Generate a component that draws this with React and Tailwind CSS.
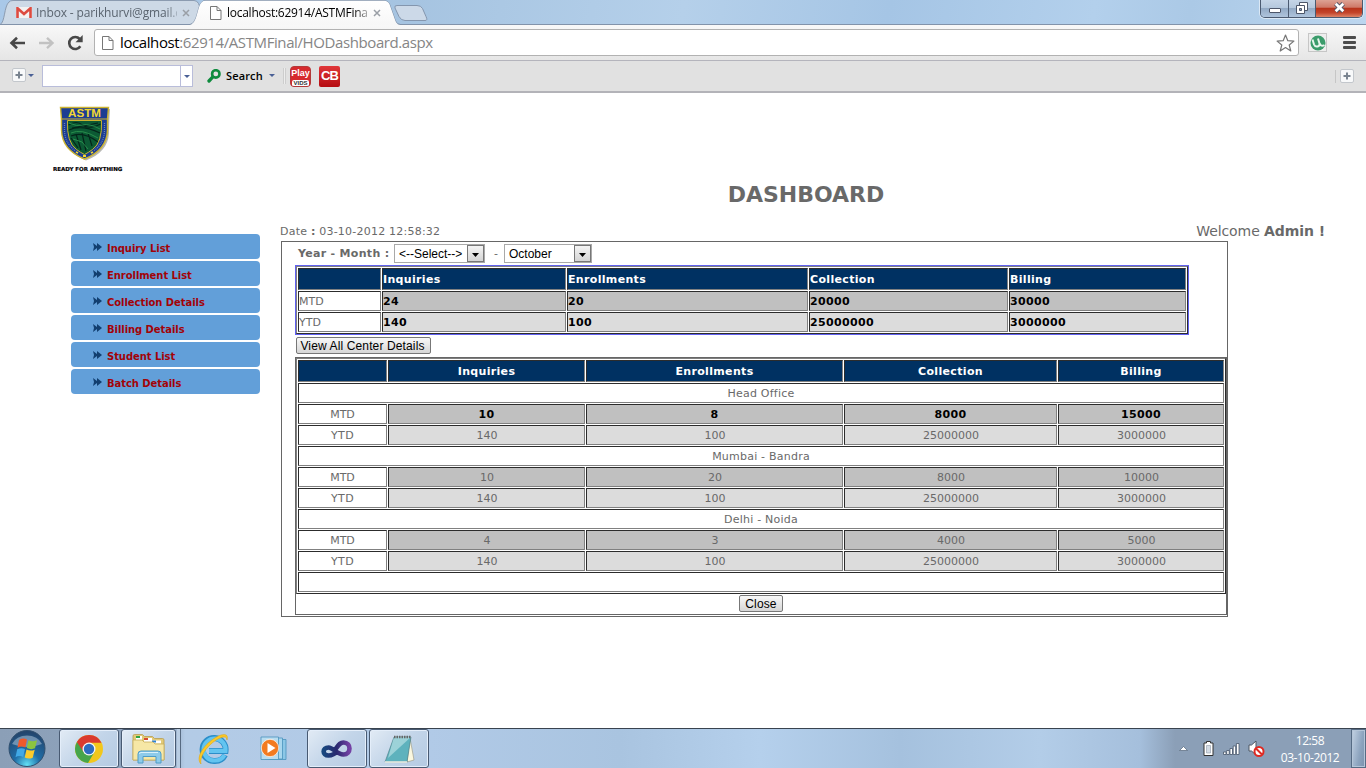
import React from "react";

const ui = "font-['Open_Sans','Noto_Sans',sans-serif]";
const page = "font-['DejaVu_Sans',sans-serif]";
const form = "font-['Liberation_Sans',sans-serif]";

function PageIcon({ className }) {
  return (
    <svg className={className} viewBox="0 0 12 14" fill="#fff" stroke="#777" strokeWidth="1">
      <path d="M.5.5h6.500l4 4v9h-10.500z" />
      <path d="M7 .5v4h4" fill="none" />
    </svg>
  );
}

function CloseX({ className }) {
  return (
    <svg className={className} viewBox="0 0 8 8" stroke="#9a9fa6" strokeWidth="1.500">
      <path d="M1 1l6 6M7 1l-6 6" />
    </svg>
  );
}

function TabStrip() {
  return (
    <div className="relative h-[25px] w-full border-b border-[#8293aa] bg-[linear-gradient(100deg,#a9c8e8_0%,#a6c4e1_30%,#b5d0ea_50%,#a5c5e5_65%,#b3d0ec_80%,#abc9e6_87%,#bcd6ef_100%)]">
      <svg className="absolute left-0 top-0 h-[25px] w-[440px]" viewBox="0 0 440 25">
        <defs>
          <linearGradient id="tab" x1="0" y1="0" x2="0" y2="1">
            <stop offset="0" stopColor="#fff" />
            <stop offset="1" stopColor="#f7f7f7" />
          </linearGradient>
        </defs>
        <path d="M0 24.500C5 23 4 6 9 2q1-1.500 4-1.500h181q3 0 4.500 3l7 18q1 3 4 3z" fill="#cdd9e6" stroke="#8b9bb0" />
        <path d="M395 8q-1-2.500 2-2.500h20q4 0 5.500 3l3.500 8q2 4-1 4h-20q-4 0-6-4z" fill="#ccd9e8" stroke="#8496ae" />
        <path d="M0 24.500h190C198 23 197 6 202 2q1-1.500 4-1.500h178q4 0 5.500 3.500l6 17q1.500 3.500 5 3.500h40" fill="none" stroke="#8293aa" />
        <path d="M190 25C198 23 197 6 202 2q1-1.200 4-1.200h178q4 0 5.500 3.500l6 17q1.500 3.700 5 3.700z" fill="url(#tab)" />
      </svg>
      <div className={"relative flex h-[25px] items-center text-[12px] " + ui}>
        <svg className="ml-[16px] h-[11px] w-[16px]" viewBox="0 0 16 11">
          <path d="M0 0h16v11H0z" fill="#f3f1f1" />
          <path d="M1.500 11V1.200L8 7l6.500-5.800V11" fill="none" stroke="#dd4b40" strokeWidth="2.600" />
        </svg>
        <div className="ml-[4px] w-[141px] whitespace-nowrap tracking-[-0.14px] text-[#5a646f] [mask-image:linear-gradient(90deg,#000_92%,rgba(0,0,0,.3))]">Inbox - parikhurvi@gmail.c</div>
        <CloseX className="ml-[5px] h-[8px] w-[8px]" />
        <PageIcon className="ml-[20px] h-[14px] w-[12px]" />
        <div className="ml-[5px] w-[141px] whitespace-nowrap tracking-[-0.26px] text-black [mask-image:linear-gradient(90deg,#000_90%,rgba(0,0,0,.3))]">localhost:62914/ASTMFina</div>
        <CloseX className="ml-[5px] h-[8px] w-[8px]" />
      </div>
      <div className="absolute right-[3px] top-0 flex h-[18px] w-[103px] overflow-hidden rounded-b-[5px] border border-t-0 border-[#4b5a70] shadow-[0_0_0_1px_#dbe8f5]">
        <div className="flex w-[28px] items-center justify-center border-r border-[#4b5a70] bg-[linear-gradient(#c5d5e7,#b5c8dd_45%,#93aac5_50%,#afc4dc)]">
          <div className="mt-[4px] h-[5px] w-[12px] rounded-[1px] border border-[#4d5669] bg-white" />
        </div>
        <div className="flex w-[27px] items-center justify-center border-r border-[#4b5a70] bg-[linear-gradient(#c5d5e7,#b5c8dd_45%,#93aac5_50%,#afc4dc)]">
          <svg className="mb-[2px] h-[12px] w-[12px]" viewBox="0 0 12 12" fill="#fff" stroke="#4d5669">
            <path d="M3.500.5h8v8h-8z" />
            <path d="M.5 3.500h8v8h-8z" />
            <path d="M3.500 6.500h2v2h-2z" fill="#8ea3bf" />
          </svg>
        </div>
        <div className="flex flex-1 items-center justify-center bg-[linear-gradient(#dda294,#cf7a69_42%,#b8341c_50%,#c4452b_75%,#dd8468)]">
          <svg className="mb-[2px] h-[11px] w-[13px]" viewBox="0 0 12 10">
            <path d="M2.500 1.500l7 7M9.500 1.500l-7 7" stroke="#525668" strokeWidth="4.200" />
            <path d="M2.500 1.500l7 7M9.500 1.500l-7 7" stroke="#fff" strokeWidth="2.500" />
          </svg>
        </div>
      </div>
    </div>
  );
}

function AddressBar() {
  return (
    <div className="flex h-[35px] w-full items-center bg-[linear-gradient(#f8f8f8,#e6e6e6)]">
      <svg className="ml-[9px] h-[14px] w-[17px]" viewBox="0 0 17 14" fill="none" stroke="#484848" strokeWidth="2.600">
        <path d="M16 7H2.500M8 1.800L2.500 7 8 12.200" />
      </svg>
      <svg className="ml-[12px] h-[14px] w-[17px]" viewBox="0 0 17 14" fill="none" stroke="#c2c2c2" strokeWidth="2.400">
        <path d="M1 7h13.500M9 1.800L14.500 7 9 12.200" />
      </svg>
      <svg className="ml-[12px] h-[16px] w-[17px]" viewBox="0 0 17 16">
        <path d="M13.300 11.300a6 6 0 1 1-.6-7.300" fill="none" stroke="#484848" strokeWidth="2.600" />
        <path d="M15.700 0v7.200H8.500z" fill="#484848" />
      </svg>
      <div className="ml-[10px] flex h-[27px] w-[1205px] items-center rounded-[3px] border border-[#b2b2b2] bg-white">
        <PageIcon className="ml-[7px] h-[14px] w-[12px]" />
        <div className={"ml-[6px] whitespace-nowrap text-[15px] tracking-[-0.4px] text-[#858585] " + ui}>
          <span className="text-black">localhost</span>:62914/ASTMFinal/HODashboard.aspx
        </div>
        <svg className="ml-auto mr-[3px] h-[18px] w-[19px]" viewBox="0 0 19 18" fill="#fff" stroke="#777" strokeWidth="1.200" strokeLinejoin="round">
          <path d="M9.500 1l2.300 5.700 6.100.4-4.700 3.900 1.600 6-5.300-3.400L4.200 17l1.600-6L1.100 7.100l6.100-.4z" />
        </svg>
      </div>
      <div className="ml-[9px] flex h-[19px] w-[19px] items-center justify-center border border-[#c6c6c6] bg-[#eee]">
        <svg className="h-[16px] w-[16px]" viewBox="0 0 16 16">
          <circle cx="8" cy="8" r="7.500" fill="#3b9c6b" />
          <path d="M2.500 4.500l1.500 5q1 2.500 3.500 2t2-3L8 3.500M9.500 8.500q1.500 3.500 5 1.500" stroke="#e9f6ee" strokeWidth="2" fill="none" />
        </svg>
      </div>
      <div className="ml-[16px] flex w-[13px] flex-col gap-[2px]">
        <div className="h-[3px] rounded-[1px] bg-[#4c4c4c]" />
        <div className="h-[3px] rounded-[1px] bg-[#4c4c4c]" />
        <div className="h-[3px] rounded-[1px] bg-[#4c4c4c]" />
      </div>
    </div>
  );
}

function Plus() {
  return (
    <div className="flex h-[14px] w-[14px] items-center justify-center rounded-[2px] border border-[#c3c7cc] bg-[#f8f9fa]">
      <svg className="h-[8px] w-[8px]" viewBox="0 0 8 8" stroke="#7a8490" strokeWidth="2"><path d="M4 .5v7M.5 4h7" /></svg>
    </div>
  );
}

function Caret({ className }) {
  return <svg className={className} viewBox="0 0 6 3" fill="#4a6096"><path d="M0 0h6L3 3z" /></svg>;
}

function ExtensionBar() {
  return (
    <div className="flex h-[33px] w-full items-center border-b-2 border-t border-b-[#b3b3b8] border-t-[#b4b4bc] bg-[#e1e1e1]">
      <div className="mb-[2px] ml-[12px]"><Plus /></div>
      <Caret className="mb-[2px] ml-[2px] h-[3px] w-[6px]" />
      <div className="ml-[8px] flex h-[22px] w-[151px] border border-[#b9bdda] bg-white">
        <div className="ml-auto flex w-[12px] items-center justify-center border-l border-[#b9bdda]"><Caret className="h-[3px] w-[6px]" /></div>
      </div>
      <svg className="ml-[14px] h-[14px] w-[14px]" viewBox="0 0 14 14" fill="none">
        <circle cx="8.800" cy="4.900" r="3.700" stroke="#0e8b3d" strokeWidth="2.600" />
        <path d="M5.600 8.200L2 12" stroke="#0e8b3d" strokeWidth="3.300" strokeLinecap="round" />
      </svg>
      <div className="ml-[5px] mt-[1px] w-[38px] whitespace-nowrap font-['Open_Sans',sans-serif] text-[11px] font-semibold tracking-[0.15px] text-black">Search</div>
      <Caret className="mb-[2px] ml-[5px] h-[3px] w-[6px]" />
      <div className="ml-[8px] flex h-[16px] w-[3px] border-x border-[#cdcdcd] bg-[#ededed]" />
      <div className="ml-[4px] flex h-[21px] w-[21px] flex-col items-center overflow-hidden rounded-[4px] border border-[#b33a3a] bg-[#d62a2e] font-['Liberation_Sans',sans-serif] font-bold">
        <div className="h-[12px] text-[9px] leading-[12px] text-white">Play</div>
        <div className="mt-[1px] h-[7px] w-[17px] rounded-[2px] bg-white text-center text-[6px] leading-[7px] text-[#333]">VIDS</div>
      </div>
      <div className="ml-[8px] flex h-[21px] w-[21px] items-center justify-center rounded-[2px] bg-[linear-gradient(#e0373a,#b50d12)] font-['Liberation_Sans',sans-serif] text-[13px] font-bold tracking-[-0.9px] text-white">CB</div>
      <div className="ml-auto mr-[4px] h-[13px] w-[1px] bg-[#c6c6c6]" />
      <div className="mr-[12px]"><Plus /></div>
    </div>
  );
}

function Logo() {
  return (
    <div className="flex h-[88px] flex-col pl-[53px]">
      <svg className="ml-[6px] mt-[13px] h-[55px] w-[53px] shrink-0" viewBox="0 0 53 55">
        <path d="M3 3h48q-1 14-1 24Q49 46 27 54.500 5 46 4 27 4 13 3 3z" fill="#b8b8b4" />
        <path d="M1.500 1.500h48Q48 14 48.500 24 48 44 25.500 53 3 44 2.500 24 3 14 1.500 1.500z" fill="#1c3d92" stroke="#cdb42f" strokeWidth="1.400" />
        <path d="M2.500 13h46" stroke="#cdb42f" strokeWidth="1.200" />
        <path d="M8.500 14.500h34q1 22-9 29-4 3-8 5-4-2-8-5-10-7-9-29z" fill="#0c5a34" stroke="#cdb42f" />
        <path d="M9.500 19q8-5 14 0t18-1M10 24q12-6 31 3M12 30q12-5 27 6M12 32l7 10M17 28l5 16M23 27l4 18M29 27l4 13M13 22l26-5" stroke="#04251a" strokeWidth="1.200" fill="none" />
        <path d="M10 17q8 4 14 2t17 4M12 27q10-5 27 5M14 33l9 3 6 7" stroke="#2f9a52" strokeWidth=".8" fill="none" />
        <path d="M5.500 17v7q0 13 11 21M45.500 17v7q0 13-11 21" stroke="#8b9ccb" strokeWidth="1.300" strokeDasharray="1 1" opacity=".7" fill="none" />
        <path d="M17 46l2 1M24 50h3M32 47l2-1" stroke="#f3d832" strokeWidth="1.800" />
        <text x="25.500" y="10.800" textAnchor="middle" textLength="33" lengthAdjust="spacingAndGlyphs" fontFamily="Liberation Sans" fontWeight="bold" fontSize="10" fill="#f3d832">ASTM</text>
      </svg>
      <div className="mt-[-2px] h-[10px] whitespace-nowrap pt-[5px] font-['DejaVu_Sans',sans-serif] text-[5.500px] font-bold leading-[10px] text-black [-webkit-text-stroke:0.2px_#000]">READY FOR ANYTHING</div>
    </div>
  );
}

const links = ["Inquiry List", "Enrollment List", "Collection Details", "Billing Details", "Student List", "Batch Details"];

function Sidebar() {
  return (
    <nav className="ml-[71px] mt-[12px] flex w-[189px] flex-col gap-[2px]">
      {links.map((l) => (
        <div key={l} className="flex h-[25px] items-center rounded-[4px] bg-[#629fd9] pl-[22px]">
          <svg className="h-[8px] w-[9px]" viewBox="0 0 9 8" fill="#123f70"><path d="M0 0l4 3V0l5 4-5 4V5L0 8l1-4z" /></svg>
          <span className="ml-[5px] mt-[4px] whitespace-nowrap text-[10px] font-bold leading-[14px] tracking-[-0.06px] text-[#a20308]">{l}</span>
        </div>
      ))}
    </nav>
  );
}

const cell = "flex items-center border pt-[2px] border-b-[#808080] border-l-[#2c2c2c] border-r-[#808080] border-t-[#2c2c2c] ";
const heads = ["Inquiries", "Enrollments", "Collection", "Billing"];

function Summary() {
  const rows = [
    ["MTD", "bg-[#c0c0c0]", ["24", "20", "20000", "30000"]],
    ["YTD", "bg-[#dcdcdc]", ["140", "100", "25000000", "3000000"]],
  ];
  return (
    <div className="ml-[13px] w-[894px] border border-[#6262f0]">
      <div className="grid grid-cols-[83px_184px_241px_199px_177px] grid-rows-[22px_20px_20px] gap-px border border-b-[#2c2c2c] border-l-[#808080] border-r-[#2c2c2c] border-t-[#808080] p-px text-[11px] leading-[14px]">
        <div className={cell + "bg-[#003162]"} />
        {heads.map((h) => <div key={h} className={cell + "bg-[#003162] font-bold tracking-[0.33px] text-white"}>{h}</div>)}
        {rows.map(([n, bg, v]) => (
          <React.Fragment key={n}>
            <div className={cell}>{n}</div>
            {v.map((x, i) => <div key={i} className={cell + bg + " font-bold tracking-[0.35px] text-black"}>{x}</div>)}
          </React.Fragment>
        ))}
      </div>
    </div>
  );
}

const centers = [
  ["Head Office", ["10", "8", "8000", "15000"]],
  ["Mumbai - Bandra", ["10", "20", "8000", "10000"]],
  ["Delhi - Noida", ["4", "3", "4000", "5000"]],
];

function Centers() {
  return (
    <div className="grid grid-cols-[89px_197px_257px_213px_166px] grid-rows-[22px] auto-rows-[20px] gap-px border border-b-[#2c2c2c] border-l-[#808080] border-r-[#2c2c2c] border-t-[#808080] p-px text-[11px] leading-[14px]">
      <div className={cell + "bg-[#003162]"} />
      {heads.map((h) => <div key={h} className={cell + "justify-center bg-[#003162] font-bold tracking-[0.33px] text-white"}>{h}</div>)}
      {centers.map(([name, mtd], k) => (
        <React.Fragment key={name}>
          <div className={cell + "col-span-5 justify-center tracking-[0.22px]"}>{name}</div>
          <div className={cell + "justify-center"}>MTD</div>
          {mtd.map((x, i) => <div key={i} className={cell + "justify-center bg-[#c0c0c0] " + (k === 0 ? "font-bold tracking-[0.35px] text-black" : "pl-px")}>{x}</div>)}
          <div className={cell + "justify-center tracking-[0.3px]"}>YTD</div>
          {["140", "100", "25000000", "3000000"].map((x, i) => <div key={i} className={cell + "justify-center bg-[#dcdcdc] pl-px"}>{x}</div>)}
        </React.Fragment>
      ))}
      <div className={cell + "col-span-5"} />
    </div>
  );
}

function Select({ label, className }) {
  return (
    <div className={"flex h-[19px] items-center border border-[#a9a9a9] bg-white text-[12px] text-black " + form + " " + className}>
      <span className="ml-[4px] whitespace-nowrap">{label}</span>
      <div className="ml-auto flex h-[17px] w-[17px] items-center justify-center border border-[#777] bg-[linear-gradient(#f4f4f4,#d4d4d4)]">
        <svg className="mt-[2px] h-[4px] w-[7px]" viewBox="0 0 7 4"><path d="M0 0h7L3.500 4z" /></svg>
      </div>
    </div>
  );
}

const btn = "flex h-[17px] items-center justify-center whitespace-nowrap rounded-[2px] border border-[#777] bg-[linear-gradient(#f8f8f8,#d6d6d6)] text-[12px] tracking-[0.13px] text-black " + form + " ";

function Main() {
  return (
    <main className="ml-[21px] w-[1045px]">
      <div className="flex h-[19px] w-[1044px] items-center justify-between">
        <div className="ml-[-1px] mt-[2px] text-[11px] tracking-[0.22px]">Date <b>:</b> 03-10-2012 12:58:32</div>
        <div className="text-[14px] tracking-[-0.08px]">Welcome <b>Admin !</b></div>
      </div>
      <div className="h-[376px] w-[947px] border border-[#666]">
        <div className="flex h-[23px] items-center pl-[16px] text-[11px]">
          <b className="w-[96px] whitespace-nowrap pt-[2px] tracking-[0.3px]">Year - Month :</b>
          <Select label="<--Select-->" className="w-[91px]" />
          <span className="w-[19px] pl-[9px] pt-[2px]">-</span>
          <Select label="October" className="w-[88px]" />
        </div>
        <Summary />
        <div className={btn + "ml-[14px] mt-[2px] w-[135px] pr-[2px]"}>View All Center Details</div>
        <div className="ml-[13px] mt-[3px] h-[258px] w-[932px] border border-[#666]">
          <Centers />
          <div className={btn + "mx-auto mt-[1px] w-[44px]"}>Close</div>
        </div>
      </div>
    </main>
  );
}

function TaskButton({ children, className }) {
  return (
    <div className={"flex h-[39px] items-center justify-center rounded-[3px] border border-[#485a72] bg-[linear-gradient(135deg,#e2ebf5,#c3d5e9_50%,#b4cae2)] shadow-[inset_0_0_0_1px_#e4eefa] " + className}>
      {children}
    </div>
  );
}

function Taskbar() {
  return (
    <footer className={"flex h-[40px] w-full items-center border-t border-[#39434f] bg-[linear-gradient(90deg,#8b9fb7_0,#90a5bf_170px,#b3cbe6_185px,#b1cae7_430px,#a9c4e0_620px,#b5d0ec_760px,#a5c1de_900px,#b3cde8_1040px,#a5bfdc_1140px,#8b9fb7_1175px,#8b9fb7_100%)] " + ui}>
      <svg className="ml-[7px] h-[39px] w-[40px]" viewBox="0 0 40 39">
        <defs>
          <radialGradient id="orb" cx=".5" cy=".95" r=".9">
            <stop offset="0" stopColor="#62e0f5" />
            <stop offset=".4" stopColor="#1f6ea8" />
            <stop offset="1" stopColor="#23466e" />
          </radialGradient>
        </defs>
        <circle cx="20" cy="19.500" r="18" fill="url(#orb)" stroke="#31506f" />
        <path d="M5 15a16 13 0 0 1 30 0q-15 6-30 0z" fill="#b9cde0" opacity=".5" />
        <path d="M12 11q4-2.500 8-.5l-1.700 8q-4-2-7.800.3z" fill="#ee5a2c" />
        <path d="M21.500 11.300q4 2 8.500 0l-2 8q-4 1.800-8.200-.3z" fill="#8cc540" />
        <path d="M10.200 20.300q4-2 7.800-.3l-1.800 8q-4-2-7.700.2z" fill="#41a9e6" />
        <path d="M19.500 20.500q4 2 8.200.2l-2 8q-4 1.800-8-.2z" fill="#fbcb2c" />
      </svg>
      <TaskButton className="ml-[12px] w-[60px]">
        <svg className="h-[28px] w-[28px]" viewBox="0 0 28 28">
          <circle cx="14" cy="14" r="14" fill="#f2c71c" />
          <path d="M14 14L1.900 7A14 14 0 0 0 13 28l6.500-11z" fill="#46a54b" />
          <path d="M1.900 7A14 14 0 0 1 26.500 7.700H14L8.500 17z" fill="#da3a2f" />
          <circle cx="14" cy="14" r="6.500" fill="#f5f5f5" />
          <circle cx="14" cy="14" r="5.200" fill="#2d6cc0" />
        </svg>
      </TaskButton>
      <TaskButton className="ml-[2px] w-[55px]">
        <svg className="h-[30px] w-[33px]" viewBox="0 0 33 30">
          <path d="M1 2q0-1.500 1.500-1.500h8l2 2h8l2 2h8q1.500 0 1.500 1.500v20H1z" fill="#e2ca78" stroke="#b89d4e" strokeWidth=".8" />
          <path d="M4 2h6v4H4zM12 4h8v4h-8zM20 6.500h9v3h-9z" fill="#fff" />
          <path d="M4 2h4v2H4z" fill="#2ea443" /><path d="M12 4h4v2h-4z" fill="#d64a32" /><path d="M20 6.500h4v2h-4z" fill="#2e82d5" />
          <path d="M1 6h9l2 2h9l2 2h9v16H1z" fill="#f6e7a6" stroke="#c8ae5c" strokeWidth=".8" />
          <path d="M6 29v-9q0-3 3-3h17q3 0 3 3v9h-5v-6.500H11V29z" fill="#8ecbea" stroke="#4f9cc7" />
          <path d="M7.500 20q0-1.500 1.500-1.500h17" fill="none" stroke="#d9f1fb" />
        </svg>
      </TaskButton>
      <div className="ml-[1px] h-[39px] w-[4px] border-r border-[#566a82] bg-[#b9cde3]" />
      <svg className="ml-[16px] h-[34px] w-[34px]" viewBox="0 0 34 34">
        <path d="M28 23q-3 6-10 6A11.500 11.500 0 1 1 28.500 19H12" fill="none" stroke="#2b8ec9" strokeWidth="6" />
        <path d="M27.500 23q-3 5.500-9.500 5.500A11 11 0 1 1 28.500 18.800H12" fill="none" stroke="#62c4f0" strokeWidth="4.200" />
        <path d="M4 32C-3 25 10 8 24 3q8-2 6 5 0-5-7-2C12 11 2 24 4 32z" fill="#fbc928" stroke="#dda00d" strokeWidth=".5" />
      </svg>
      <svg className="ml-[29px] h-[25px] w-[28px]" viewBox="0 0 28 25">
        <path d="M9 3.500h17v20H9z" fill="#8cc7e6" stroke="#4a93bc" strokeWidth=".8" />
        <path d="M5 2h17.500v21H5z" fill="#a9d7ee" stroke="#4a93bc" strokeWidth=".8" />
        <path d="M1 1h17.500v22.500H1z" fill="#b9ddf0" stroke="#4a93bc" strokeWidth=".8" />
        <circle cx="10" cy="12" r="8.700" fill="#f27b21" stroke="#fff" strokeWidth=".7" />
        <path d="M7.500 7l8 5-8 5z" fill="#fff" />
      </svg>
      <TaskButton className="ml-[19px] w-[60px]">
        <svg className="h-[18px] w-[32px]" viewBox="0 0 32 18">
          <defs>
            <linearGradient id="inf"><stop offset="0" stopColor="#18477e" /><stop offset=".5" stopColor="#29296f" /><stop offset="1" stopColor="#7441a4" /></linearGradient>
          </defs>
          <path d="M17 10.500C13 15 10 15.500 7.500 15.500 1 15.500 1 7.500 7.500 7.500c5 0 8 7 15 7 8 0 8-12 0-12-4 0-5 3-9 8" fill="none" stroke="url(#inf)" strokeWidth="4.600" />
        </svg>
      </TaskButton>
      <TaskButton className="ml-[2px] w-[60px]">
        <svg className="h-[30px] w-[32px]" viewBox="0 0 32 30">
          <path d="M27 4l4 22-7 2z" fill="#faf7df" stroke="#98947c" strokeWidth=".6" />
          <path d="M11 3h17l-4 25H2z" fill="#5eb2bd" stroke="#487982" strokeWidth=".6" />
          <path d="M11 3h17L5 24z" fill="#b6e0e4" opacity=".7" />
          <path d="M11 3h17" stroke="#666" strokeWidth="2.500" strokeDasharray="1.500 1" />
          <path d="M2 28l22 0" stroke="#f2f2e6" strokeWidth="1.500" />
        </svg>
      </TaskButton>
      <div className="ml-auto flex items-center">
        <svg className="h-[5px] w-[9px]" viewBox="0 0 9 5" fill="#fff" stroke="#53647a" strokeWidth=".7"><path d="M.5 4.500L4.500.5l4 4z" /></svg>
        <svg className="ml-[15px] h-[15px] w-[11px]" viewBox="0 0 11 15">
          <path d="M3.500.5h4v1.500H10v12.500H1V2h2.500z" fill="#fff" stroke="#333" />
          <path d="M3.500 4.500h4v7.500h-4z" fill="#d4dce5" stroke="#8e9aa8" strokeWidth=".6" />
        </svg>
        <svg className="ml-[9px] h-[12px] w-[17px]" viewBox="0 0 17 12" fill="#fff" stroke="#46566a" strokeWidth=".8">
          <path d="M.5 9h2.500v2.500H.5zM3.700 7.500h2.500v4H3.700zM7 5.500h2.500v6H7zM10.200 3h2.500v8.500h-2.500zM13.400.5H16v11h-2.600z" />
        </svg>
        <svg className="ml-[8px] h-[17px] w-[17px]" viewBox="0 0 17 17">
          <path d="M1 5h2.500L8 1v14l-4.500-4H1z" fill="#fff" stroke="#4d5663" />
          <circle cx="11" cy="11.500" r="4.500" fill="#fff" stroke="#df2a22" strokeWidth="2" />
          <path d="M8 8.500l6 6" stroke="#df2a22" strokeWidth="2" />
        </svg>
        <div className="ml-[15px] w-[60px] whitespace-nowrap text-center text-[12px] leading-[17px] tracking-[-0.4px] text-white">
          <div>12:58</div>
          <div>03-10-2012</div>
        </div>
        <div className="ml-[11px] h-[39px] w-[15px] border border-[#566b84] bg-[linear-gradient(100deg,#c3d2e3,#8da4bf_60%,#7a91ac)] shadow-[inset_0_0_0_1px_#b4c5d8]" />
      </div>
    </footer>
  );
}

export default function App() {
  return (
    <div className="flex h-[768px] w-[1366px] flex-col overflow-hidden bg-white">
      <TabStrip />
      <AddressBar />
      <ExtensionBar />
      <div className={"h-[635px] text-[#696969] " + page}>
        <Logo />
        <h1 className="h-[41px] pl-[246px] text-center text-[22px] font-bold leading-[27px]">DASHBOARD</h1>
        <div className="flex">
          <Sidebar />
          <Main />
        </div>
      </div>
      <Taskbar />
    </div>
  );
}
